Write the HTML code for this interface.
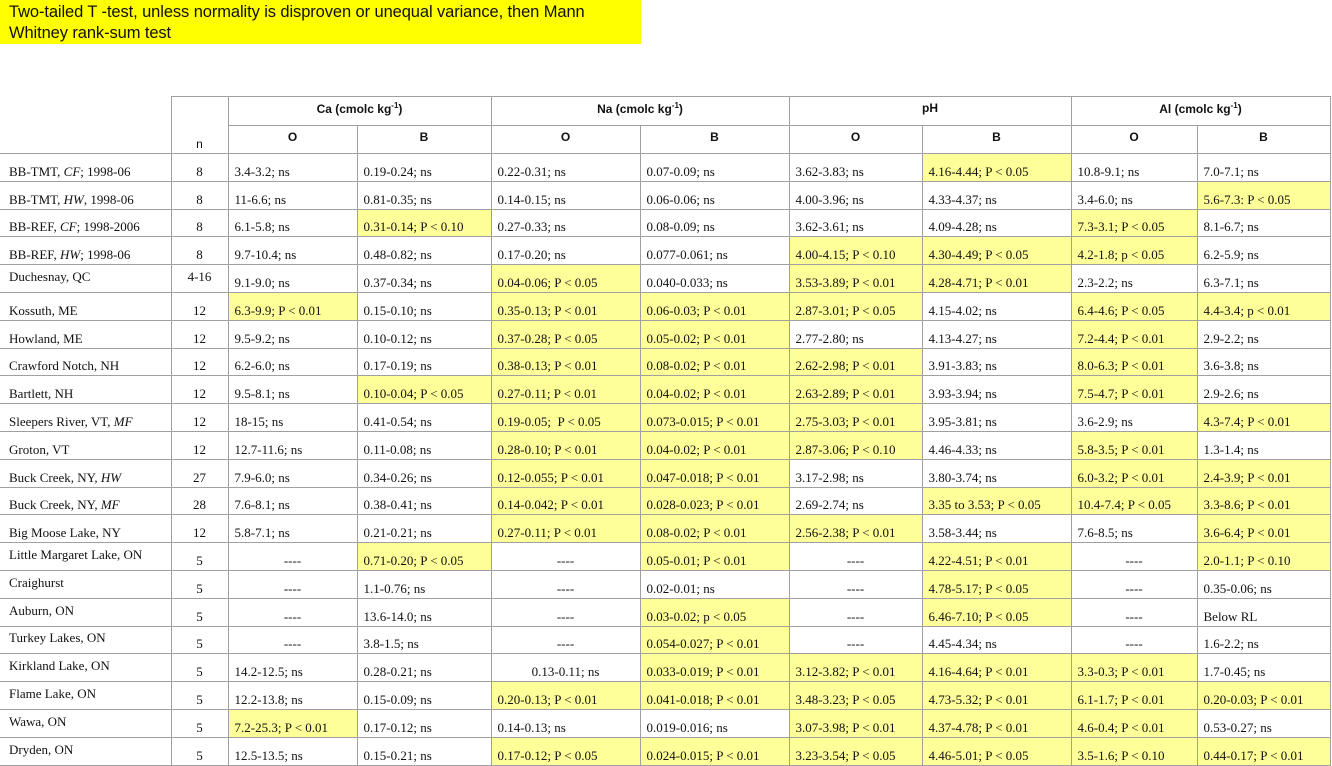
<!DOCTYPE html>
<html><head><meta charset="utf-8"><style>
body{margin:0;background:#fff;width:1332px;height:766px;overflow:hidden;position:relative}
.note{position:absolute;left:0;top:0;width:641px;height:44px;background:#ffff00;font:16.5px/21px "Liberation Sans",sans-serif;color:#111;padding:2px 0 0 9px;box-sizing:border-box;letter-spacing:-0.1px}
table{position:absolute;left:0;top:96px;border-collapse:collapse;table-layout:fixed;font:13px "Liberation Serif",serif;color:#111}
td{border:1px solid #a0a0a0;height:27.8px;padding:0 0 1px 6px;vertical-align:bottom;white-space:nowrap;overflow:hidden;box-sizing:border-box}
td.n{text-align:center;padding-left:0}
td.c{text-align:center;padding-left:0}
td.y{background:#ffff99}
tr.h td{font:bold 12px "Liberation Sans",sans-serif;text-align:center;padding:0 0 6px 0;vertical-align:middle}
tr.h td.nh{font-weight:normal;vertical-align:bottom;padding-bottom:3px}
td.blank{border-top:none;border-left:none}
td.f{border-left:none;padding-left:9px}
td.m{vertical-align:middle;padding-bottom:3px}
</style></head><body>
<div class="note">Two-tailed T -test, unless normality is disproven or unequal variance, then Mann<br>Whitney rank-sum test</div>
<table>
<colgroup><col style="width:171px"><col style="width:57px"><col style="width:129px"><col style="width:134px"><col style="width:149px"><col style="width:149px"><col style="width:133px"><col style="width:149px"><col style="width:126px"><col style="width:133px"></colgroup>
<tr class="h" style="height:29px"><td class="blank" rowspan="2"></td><td class="nh" rowspan="2" style="padding-bottom:2px">n</td><td colspan="2">Ca (cmolc kg<sup style="font-size:8px">-1</sup>)</td><td colspan="2">Na (cmolc kg<sup style="font-size:8px">-1</sup>)</td><td colspan="2">pH</td><td colspan="2">Al (cmolc kg<sup style="font-size:8px">-1</sup>)</td></tr>
<tr class="h" style="height:28px"><td>O</td><td>B</td><td>O</td><td>B</td><td>O</td><td>B</td><td>O</td><td>B</td></tr>
<tr><td class="f">BB-TMT, <i>CF</i>; 1998-06</td><td class="n">8</td><td>3.4-3.2; ns</td><td>0.19-0.24; ns</td><td>0.22-0.31; ns</td><td>0.07-0.09; ns</td><td>3.62-3.83; ns</td><td class="y">4.16-4.44; P &lt; 0.05</td><td>10.8-9.1; ns</td><td>7.0-7.1; ns</td></tr>
<tr><td class="f">BB-TMT, <i>HW</i>, 1998-06</td><td class="n">8</td><td>11-6.6; ns</td><td>0.81-0.35; ns</td><td>0.14-0.15; ns</td><td>0.06-0.06; ns</td><td>4.00-3.96; ns</td><td>4.33-4.37; ns</td><td>3.4-6.0; ns</td><td class="y">5.6-7.3: P &lt; 0.05</td></tr>
<tr><td class="f">BB-REF, <i>CF</i>; 1998-2006</td><td class="n">8</td><td>6.1-5.8; ns</td><td class="y">0.31-0.14; P &lt; 0.10</td><td>0.27-0.33; ns</td><td>0.08-0.09; ns</td><td>3.62-3.61; ns</td><td>4.09-4.28; ns</td><td class="y">7.3-3.1; P &lt; 0.05</td><td>8.1-6.7; ns</td></tr>
<tr><td class="f">BB-REF, <i>HW</i>; 1998-06</td><td class="n">8</td><td>9.7-10.4; ns</td><td>0.48-0.82; ns</td><td>0.17-0.20; ns</td><td>0.077-0.061; ns</td><td class="y">4.00-4.15; P &lt; 0.10</td><td class="y">4.30-4.49; P &lt; 0.05</td><td class="y">4.2-1.8; p &lt; 0.05</td><td>6.2-5.9; ns</td></tr>
<tr><td class="f m">Duchesnay, QC</td><td class="n m">4-16</td><td>9.1-9.0; ns</td><td>0.37-0.34; ns</td><td class="y">0.04-0.06; P &lt; 0.05</td><td>0.040-0.033; ns</td><td class="y">3.53-3.89; P &lt; 0.01</td><td class="y">4.28-4.71; P &lt; 0.01</td><td>2.3-2.2; ns</td><td>6.3-7.1; ns</td></tr>
<tr><td class="f">Kossuth, ME</td><td class="n">12</td><td class="y">6.3-9.9; P &lt; 0.01</td><td>0.15-0.10; ns</td><td class="y">0.35-0.13; P &lt; 0.01</td><td class="y">0.06-0.03; P &lt; 0.01</td><td class="y">2.87-3.01; P &lt; 0.05</td><td>4.15-4.02; ns</td><td class="y">6.4-4.6; P &lt; 0.05</td><td class="y">4.4-3.4; p &lt; 0.01</td></tr>
<tr><td class="f">Howland, ME</td><td class="n">12</td><td>9.5-9.2; ns</td><td>0.10-0.12; ns</td><td class="y">0.37-0.28; P &lt; 0.05</td><td class="y">0.05-0.02; P &lt; 0.01</td><td>2.77-2.80; ns</td><td>4.13-4.27; ns</td><td class="y">7.2-4.4; P &lt; 0.01</td><td>2.9-2.2; ns</td></tr>
<tr><td class="f">Crawford Notch, NH</td><td class="n">12</td><td>6.2-6.0; ns</td><td>0.17-0.19; ns</td><td class="y">0.38-0.13; P &lt; 0.01</td><td class="y">0.08-0.02; P &lt; 0.01</td><td class="y">2.62-2.98; P &lt; 0.01</td><td>3.91-3.83; ns</td><td class="y">8.0-6.3; P &lt; 0.01</td><td>3.6-3.8; ns</td></tr>
<tr><td class="f">Bartlett, NH</td><td class="n">12</td><td>9.5-8.1; ns</td><td class="y">0.10-0.04; P &lt; 0.05</td><td class="y">0.27-0.11; P &lt; 0.01</td><td class="y">0.04-0.02; P &lt; 0.01</td><td class="y">2.63-2.89; P &lt; 0.01</td><td>3.93-3.94; ns</td><td class="y">7.5-4.7; P &lt; 0.01</td><td>2.9-2.6; ns</td></tr>
<tr><td class="f">Sleepers River, VT, <i>MF</i></td><td class="n">12</td><td>18-15; ns</td><td>0.41-0.54; ns</td><td class="y">0.19-0.05;&nbsp; P &lt; 0.05</td><td class="y">0.073-0.015; P &lt; 0.01</td><td class="y">2.75-3.03; P &lt; 0.01</td><td>3.95-3.81; ns</td><td>3.6-2.9; ns</td><td class="y">4.3-7.4; P &lt; 0.01</td></tr>
<tr><td class="f">Groton, VT</td><td class="n">12</td><td>12.7-11.6; ns</td><td>0.11-0.08; ns</td><td class="y">0.28-0.10; P &lt; 0.01</td><td class="y">0.04-0.02; P &lt; 0.01</td><td class="y">2.87-3.06; P &lt; 0.10</td><td>4.46-4.33; ns</td><td class="y">5.8-3.5; P &lt; 0.01</td><td>1.3-1.4; ns</td></tr>
<tr><td class="f">Buck Creek, NY, <i>HW</i></td><td class="n">27</td><td>7.9-6.0; ns</td><td>0.34-0.26; ns</td><td class="y">0.12-0.055; P &lt; 0.01</td><td class="y">0.047-0.018; P &lt; 0.01</td><td>3.17-2.98; ns</td><td>3.80-3.74; ns</td><td class="y">6.0-3.2; P &lt; 0.01</td><td class="y">2.4-3.9; P &lt; 0.01</td></tr>
<tr><td class="f">Buck Creek, NY, <i>MF</i></td><td class="n">28</td><td>7.6-8.1; ns</td><td>0.38-0.41; ns</td><td class="y">0.14-0.042; P &lt; 0.01</td><td class="y">0.028-0.023; P &lt; 0.01</td><td>2.69-2.74; ns</td><td class="y">3.35 to 3.53; P &lt; 0.05</td><td class="y">10.4-7.4; P &lt; 0.05</td><td class="y">3.3-8.6; P &lt; 0.01</td></tr>
<tr><td class="f">Big Moose Lake, NY</td><td class="n">12</td><td>5.8-7.1; ns</td><td>0.21-0.21; ns</td><td class="y">0.27-0.11; P &lt; 0.01</td><td class="y">0.08-0.02; P &lt; 0.01</td><td class="y">2.56-2.38; P &lt; 0.01</td><td>3.58-3.44; ns</td><td>7.6-8.5; ns</td><td class="y">3.6-6.4; P &lt; 0.01</td></tr>
<tr><td class="f m">Little Margaret Lake, ON</td><td class="n">5</td><td class="c">----</td><td class="y">0.71-0.20; P &lt; 0.05</td><td class="c">----</td><td class="y">0.05-0.01; P &lt; 0.01</td><td class="c">----</td><td class="y">4.22-4.51; P &lt; 0.01</td><td class="c">----</td><td class="y">2.0-1.1; P &lt; 0.10</td></tr>
<tr><td class="f m">Craighurst</td><td class="n">5</td><td class="c">----</td><td>1.1-0.76; ns</td><td class="c">----</td><td>0.02-0.01; ns</td><td class="c">----</td><td class="y">4.78-5.17; P &lt; 0.05</td><td class="c">----</td><td>0.35-0.06; ns</td></tr>
<tr><td class="f m">Auburn, ON</td><td class="n">5</td><td class="c">----</td><td>13.6-14.0; ns</td><td class="c">----</td><td class="y">0.03-0.02; p &lt; 0.05</td><td class="c">----</td><td class="y">6.46-7.10; P &lt; 0.05</td><td class="c">----</td><td>Below RL</td></tr>
<tr><td class="f m">Turkey Lakes, ON</td><td class="n">5</td><td class="c">----</td><td>3.8-1.5; ns</td><td class="c">----</td><td class="y">0.054-0.027; P &lt; 0.01</td><td class="c">----</td><td>4.45-4.34; ns</td><td class="c">----</td><td>1.6-2.2; ns</td></tr>
<tr><td class="f m">Kirkland Lake, ON</td><td class="n">5</td><td>14.2-12.5; ns</td><td>0.28-0.21; ns</td><td class="c">0.13-0.11; ns</td><td class="y">0.033-0.019; P &lt; 0.01</td><td class="y">3.12-3.82; P &lt; 0.01</td><td class="y">4.16-4.64; P &lt; 0.01</td><td class="y">3.3-0.3; P &lt; 0.01</td><td>1.7-0.45; ns</td></tr>
<tr><td class="f m">Flame Lake, ON</td><td class="n">5</td><td>12.2-13.8; ns</td><td>0.15-0.09; ns</td><td class="y">0.20-0.13; P &lt; 0.01</td><td class="y">0.041-0.018; P &lt; 0.01</td><td class="y">3.48-3.23; P &lt; 0.05</td><td class="y">4.73-5.32; P &lt; 0.01</td><td class="y">6.1-1.7; P &lt; 0.01</td><td class="y">0.20-0.03; P &lt; 0.01</td></tr>
<tr><td class="f m">Wawa, ON</td><td class="n">5</td><td class="y">7.2-25.3; P &lt; 0.01</td><td>0.17-0.12; ns</td><td>0.14-0.13; ns</td><td>0.019-0.016; ns</td><td class="y">3.07-3.98; P &lt; 0.01</td><td class="y">4.37-4.78; P &lt; 0.01</td><td class="y">4.6-0.4; P &lt; 0.01</td><td>0.53-0.27; ns</td></tr>
<tr><td class="f m">Dryden, ON</td><td class="n">5</td><td>12.5-13.5; ns</td><td>0.15-0.21; ns</td><td class="y">0.17-0.12; P &lt; 0.05</td><td class="y">0.024-0.015; P &lt; 0.01</td><td class="y">3.23-3.54; P &lt; 0.05</td><td class="y">4.46-5.01; P &lt; 0.05</td><td class="y">3.5-1.6; P &lt; 0.10</td><td class="y">0.44-0.17; P &lt; 0.01</td></tr>
</table>
</body></html>
